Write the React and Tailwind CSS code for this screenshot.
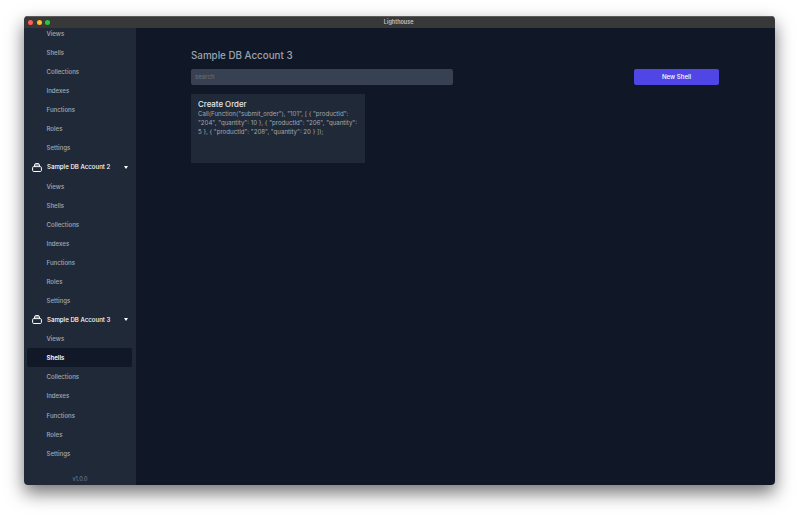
const links = ["Views", "Shells", "Collections", "Indexes", "Functions", "Roles", "Settings"];

function DbIcon() {
  return (
    <svg width="10" height="9" viewBox="0 0 10 9" fill="none" stroke="white" strokeWidth="1" className="shrink-0">
      <rect x=".6" y="3.6" width="8.8" height="4.9" rx="1.1" />
      <path d="M2.2 3.6 L2.9 1.1 C3 .8 3.2 .6 3.5 .6 H6.5 C6.8 .6 7 .8 7.1 1.1 L7.8 3.6" fill="#c9ccd1" fillOpacity=".55" />
    </svg>
  );
}

function Links({ active }) {
  return links.map((l) => (
    <div
      key={l}
      className={
        "h-[19.08px] flex items-center pl-[19.5px] text-[6.125px] font-medium rounded-[2px] " +
        (l === active ? "bg-[#111827] text-white font-semibold" : "text-[#a3aab5]")
      }
    >
      {l}
    </div>
  ));
}

function Account({ name, active }) {
  return (
    <>
      <div className="h-[19.08px] flex items-center pl-[5px] pr-[4.5px] text-[6.125px] font-medium text-white">
        <DbIcon />
        <span className="ml-[5px] flex-1">{name}</span>
        <span className="w-0 h-0 border-l-[2px] border-r-[2px] border-t-[3.6px] border-l-transparent border-r-transparent border-t-white" />
      </div>
      <Links active={active} />
    </>
  );
}

export default function App() {
  return (
    <div className="w-[799px] h-[517px] bg-white pl-[24px] pt-[16px] overflow-hidden font-['Inter',sans-serif]">
      <div className="w-[751px] h-[469px] flex flex-col rounded-[4px] overflow-hidden shadow-[0_8px_18px_rgba(0,0,0,0.55)]">
        {/* Titlebar */}
        <div className="h-[12px] shrink-0 bg-[#383838] border-t border-[#5c5c5c] flex items-center px-[4px]">
          <div className="flex gap-[3.7px]">
            <span className="w-[5px] h-[5px] rounded-full bg-[#ff5f57]" />
            <span className="w-[5px] h-[5px] rounded-full bg-[#febc2e]" />
            <span className="w-[5px] h-[5px] rounded-full bg-[#28c840]" />
          </div>
          <span className="flex-1 text-center pr-[24px] text-[5.5px] font-semibold text-[#c4c4c4]">Lighthouse</span>
        </div>

        <div className="flex flex-1 min-h-0">
          {/* Sidebar */}
          <aside className="w-[112px] shrink-0 bg-[#1f2937] flex flex-col pl-[3px] pr-[4px] overflow-hidden">
            <div className="-mt-[4px] flex-1">
              <Links />
              <Account name="Sample DB Account 2" />
              <Account name="Sample DB Account 3" active="Shells" />
            </div>
            <div className="h-[10px] text-center text-[5.5px] text-[#7c8594] pl-[1px]">v1.0.0</div>
          </aside>

          {/* Main */}
          <main className="flex-1 bg-[#101726] pl-[55px] pr-[56px] pt-[21px]">
            <h1 className="text-[9.8px] leading-[14px] font-medium text-[#9ca3af]">Sample DB Account 3</h1>
            <div className="flex justify-between mt-[6px]">
              <div className="w-[262px] h-[16px] bg-[#374151] rounded-[2px] flex items-center pl-[4px] text-[6.125px] text-[#6b7280]">
                search
              </div>
              <button className="w-[85px] h-[16px] bg-[#4f46e5] rounded-[2px] text-[6.125px] font-medium text-white">
                New Shell
              </button>
            </div>
            <div className="w-[174px] h-[69px] mt-[9px] bg-[#1f2937] px-[7px] pt-[5px]">
              <div className="text-[7.875px] leading-[10px] font-medium text-[#e5e7eb]">Create Order</div>
              <p className="text-[6.125px] leading-[8.9px] text-[#a3aab5] mt-[1px]">
                Call(Function("submit_order"), "101", [ &#123; "productId": "204", "quantity": 10 &#125;, &#123; "productId": "206", "quantity": 5 &#125;, &#123; "productId": "208", "quantity": 20 &#125; ]);
              </p>
            </div>
          </main>
        </div>
      </div>
    </div>
  );
}
